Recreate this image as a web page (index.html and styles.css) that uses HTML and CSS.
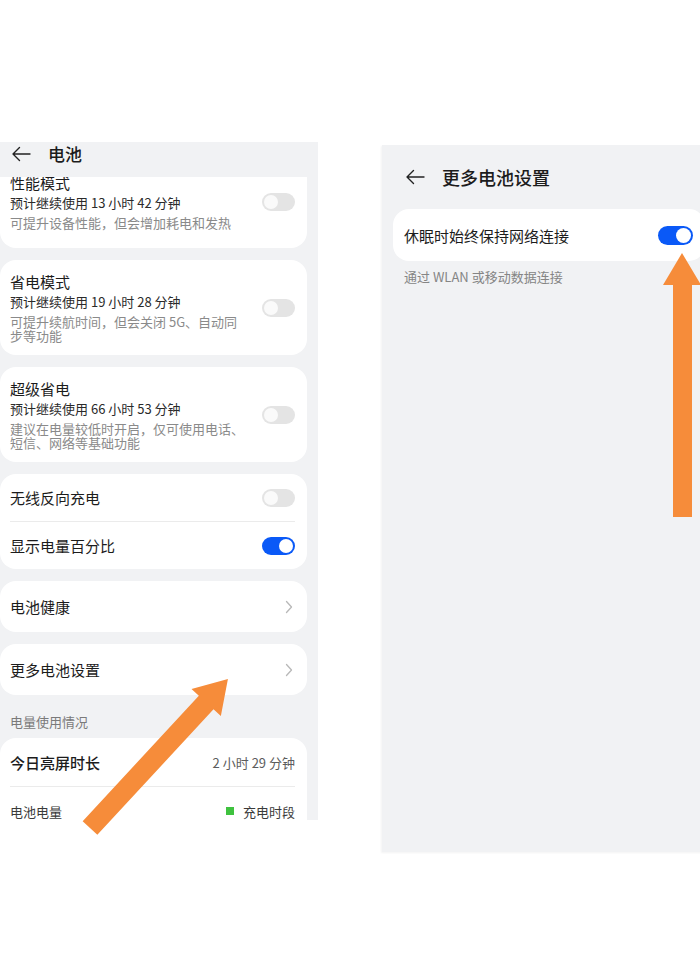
FILE: index.html
```html
<!DOCTYPE html>
<html lang="zh-CN">
	<head>
		<meta charset="UTF-8" />
		<meta name="viewport" content="width=700, initial-scale=1" />
		<title>电池设置</title>
		<link rel="stylesheet" href="styles.css">
	</head>

	<body>
		<div class="screens">
			<!-- left phone: 电池 -->
			<div class="phone phone-left">
				<div class="topbar">
					<svg class="back" width="20" height="20" viewBox="0 0 20 20">
						<path d="M19 10H2M8.5 3.5L2 10l6.5 6.5" />
					</svg>
					<span class="topbar-title">电池</span>
				</div>

				<div class="list">
					<div class="card card-first">
						<div class="item">
							<div class="item-text">
								<div class="item-title">性能模式</div>
								<div class="item-sub">预计继续使用 13 小时 42 分钟</div>
								<div class="item-desc">可提升设备性能，但会增加耗电和发热</div>
							</div>
							<span class="switch"></span>
						</div>
					</div>

					<div class="card">
						<div class="item">
							<div class="item-text">
								<div class="item-title">省电模式</div>
								<div class="item-sub">预计继续使用 19 小时 28 分钟</div>
								<div class="item-desc">可提升续航时间，但会关闭 5G、自动同步等功能</div>
							</div>
							<span class="switch"></span>
						</div>
					</div>

					<div class="card">
						<div class="item">
							<div class="item-text">
								<div class="item-title">超级省电</div>
								<div class="item-sub">预计继续使用 66 小时 53 分钟</div>
								<div class="item-desc">建议在电量较低时开启，仅可使用电话、短信、网络等基础功能</div>
							</div>
							<span class="switch"></span>
						</div>
					</div>

					<div class="card">
						<div class="row">
							<span class="row-label">无线反向充电</span>
							<span class="switch"></span>
						</div>
						<div class="row">
							<span class="row-label">显示电量百分比</span>
							<span class="switch switch-on"></span>
						</div>
					</div>

					<div class="card">
						<div class="row row-nav">
							<span class="row-label">电池健康</span>
							<svg class="chevron" width="8" height="14" viewBox="0 0 8 14">
								<path d="M1.5 1.5L6.5 7l-5 5.5" />
							</svg>
						</div>
					</div>

					<div class="card">
						<div class="row row-nav">
							<span class="row-label">更多电池设置</span>
							<svg class="chevron" width="8" height="14" viewBox="0 0 8 14">
								<path d="M1.5 1.5L6.5 7l-5 5.5" />
							</svg>
						</div>
					</div>

					<div class="section-label">电量使用情况</div>

					<div class="card">
						<div class="row row-stat">
							<span class="row-label row-strong">今日亮屏时长</span>
							<span class="row-value">2 小时 29 分钟</span>
						</div>
						<div class="row row-stat">
							<span class="row-small">电池电量</span>
							<span class="legend"><i class="legend-dot"></i>充电时段</span>
						</div>
					</div>
				</div>
			</div>

			<!-- right phone: 更多电池设置 -->
			<div class="phone phone-right">
				<div class="topbar topbar-large">
					<svg class="back" width="20" height="20" viewBox="0 0 20 20">
						<path d="M19 10H2M8.5 3.5L2 10l6.5 6.5" />
					</svg>
					<span class="topbar-title">更多电池设置</span>
				</div>

				<div class="card card-wide">
					<div class="row">
						<span class="row-label">休眠时始终保持网络连接</span>
						<span class="switch switch-on switch-large"></span>
					</div>
				</div>
				<p class="hint">通过 WLAN 或移动数据连接</p>
			</div>
		</div>

		<!-- orange arrows drawn over both screenshots -->
		<svg class="arrows" width="700" height="967" viewBox="0 0 700 967">
			<polygon
				transform="translate(90 828) rotate(-47.2)"
				points="0,-10 171,-10 171,-20 203,0 171,20 171,10 0,10"
			/>
			<polygon points="673,517 673,285 663,285 682,253 701,285 692,285 692,517" />
		</svg>
	</body>
</html>
```

FILE: styles.css
```css
* {
	box-sizing: border-box;
}

html,
body {
	margin: 0;
	background-color: #fff;
}

body {
	position: relative;
	width: 700px;
	height: 967px;
	overflow: hidden;
	font-family: "Noto Sans CJK SC", "Noto Sans", sans-serif;
	color: #1c1c1c;
}

.screens {
	display: flex;
	align-items: flex-start;
	gap: 64px;
}

.phone {
	background-color: #f1f2f4;
	overflow: hidden;
	display: flex;
	flex-direction: column;
	flex-shrink: 0;
}

.phone-left {
	width: 318px;
	height: 678px;
	margin-top: 142px;
}

.phone-right {
	width: 334px;
	height: 707px;
	margin-top: 145px;
	box-shadow: -1px 1px 2px rgba(0, 0, 0, 0.05);
}

/* top bar */

.topbar {
	display: flex;
	align-items: center;
	gap: 17px;
	height: 35px;
	padding: 0 0 11px 11px;
	flex-shrink: 0;
}

.topbar-large {
	height: 64px;
	padding: 0 0 0 23px;
}

.back {
	fill: none;
	stroke: #222;
	stroke-width: 1.4;
	stroke-linecap: round;
	stroke-linejoin: round;
}

.topbar-title {
	font-size: 17px;
	line-height: 24px;
	font-weight: 500;
}

.topbar-large .topbar-title {
	font-size: 18px;
}

/* list of cards */

.list {
	flex: 1;
	overflow: hidden;
	padding-right: 11px;
}

.card {
	background-color: #fff;
	border-radius: 16px;
	margin-bottom: 12px;
}

.card-first {
	margin-top: -16px;
}

.item {
	display: flex;
	align-items: center;
	padding: 12px 12px 12px 10px;
}

.card-first .item {
	padding-bottom: 18px;
}

.item-text {
	width: 236px;
	margin-right: auto;
}

.item-title {
	font-size: 15px;
	line-height: 20px;
}

.item-sub {
	font-size: 13px;
	line-height: 20px;
	color: #2a2a2a;
}

.item-desc {
	margin-top: 3px;
	font-size: 13px;
	line-height: 14px;
	color: #8a8a8a;
}

.row {
	display: flex;
	align-items: center;
	justify-content: space-between;
	height: 47px;
	margin: 0 12px 0 10px;
}

.row + .row {
	height: 48px;
	border-top: 1px solid #ebebeb;
}

.row-nav {
	height: 51px;
}

.row-stat {
	height: 48px;
}

.row-stat + .row-stat {
	height: 49px;
}

.row-label {
	font-size: 15px;
}

.row-strong {
	font-weight: 500;
}

.row-value,
.row-small,
.legend {
	font-size: 13px;
	color: #5c5c5c;
}

.row-small {
	color: #3a3a3a;
}

.legend {
	display: flex;
	align-items: center;
	gap: 9px;
	color: #3a3a3a;
}

.legend-dot {
	width: 8px;
	height: 8px;
	background-color: #3fc23f;
}

.chevron {
	fill: none;
	stroke: #b8b8b8;
	stroke-width: 1.3;
	stroke-linecap: round;
	stroke-linejoin: round;
	margin-right: 2px;
}

.section-label {
	padding: 6px 10px 7px;
	margin-bottom: 0;
	font-size: 13px;
	line-height: 18px;
	color: #7a7a7a;
}

/* switches */

.switch {
	position: relative;
	flex-shrink: 0;
	width: 33px;
	height: 18px;
	border-radius: 9px;
	background-color: #e4e4e4;
}

.switch::after {
	content: "";
	position: absolute;
	top: 2px;
	left: 2px;
	width: 14px;
	height: 14px;
	border-radius: 50%;
	background-color: #fafafa;
}

.switch-on {
	background-color: #0a59f7;
}

.switch-on::after {
	left: auto;
	right: 2px;
	background-color: #fff;
}

.switch-large {
	width: 35px;
	height: 19px;
	border-radius: 10px;
}

.switch-large::after {
	width: 15px;
	height: 15px;
}

/* right screen */

.card-wide {
	margin: 0 11px;
}

.card-wide .row {
	height: 52px;
	margin: 0 12px 0 11px;
}

.hint {
	margin: 8px 0 0 22px;
	font-size: 13px;
	line-height: 16px;
	color: #858585;
}

/* overlay */

.arrows {
	position: absolute;
	top: 0;
	left: 0;
	fill: #f68c3a;
	pointer-events: none;
}
```
